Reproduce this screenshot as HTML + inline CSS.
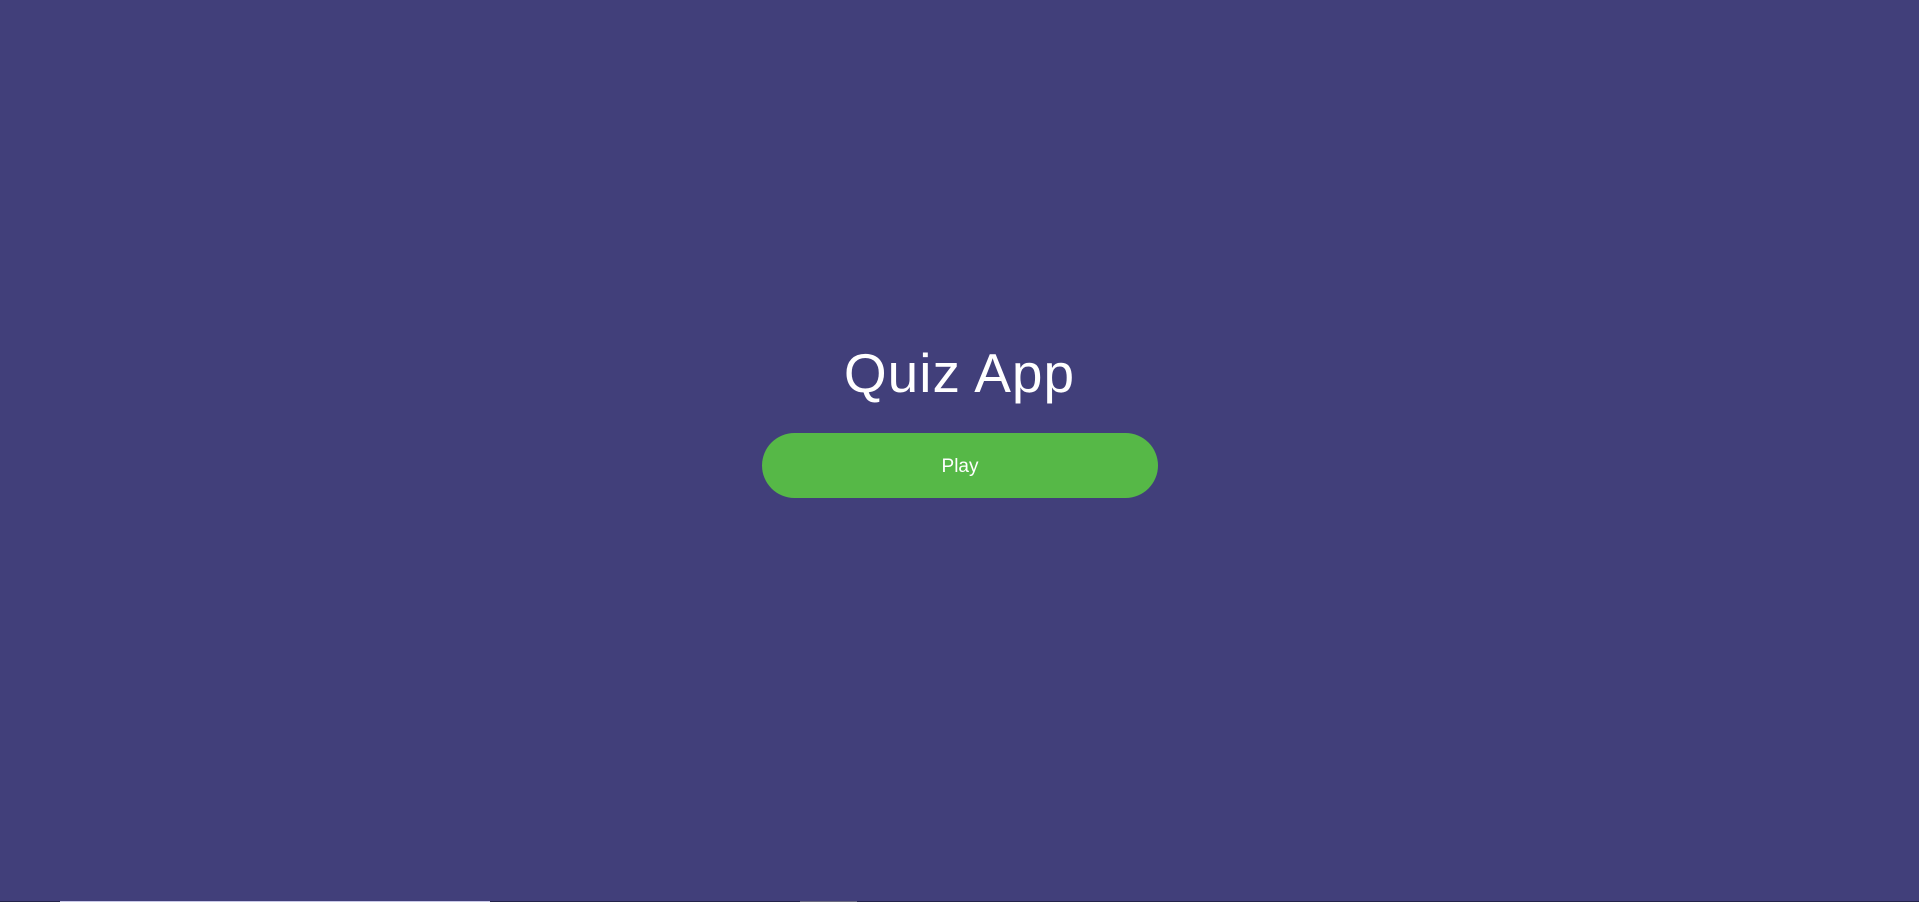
<!DOCTYPE html>
<html><head><style>
html,body{margin:0;padding:0;width:1919px;height:902px;overflow:hidden;background:#413f7a;font-family:"Liberation Sans",sans-serif;position:relative}
h1{position:absolute;left:0;right:0;top:338px;margin:0;text-align:center;color:#fff;font-weight:normal;font-size:55px;line-height:70px;letter-spacing:1px}
.btn{position:absolute;left:762px;top:433px;width:396px;height:65px;border-radius:33px;background:#56b847;color:#fff;font-size:19px;line-height:68px;text-align:center}
.bar{position:absolute;bottom:0;left:0;width:1919px;height:1px;background:#23234a}
.b1{position:absolute;bottom:0;left:60px;width:430px;height:1px;background:#c8c8e8}
.b2{position:absolute;bottom:0;left:800px;width:57px;height:1px;background:#6a6a80}
</style></head><body>
<h1>Quiz App</h1>
<div class="btn">Play</div>
<div class="bar"></div><div class="b1"></div><div class="b2"></div>
</body></html>
